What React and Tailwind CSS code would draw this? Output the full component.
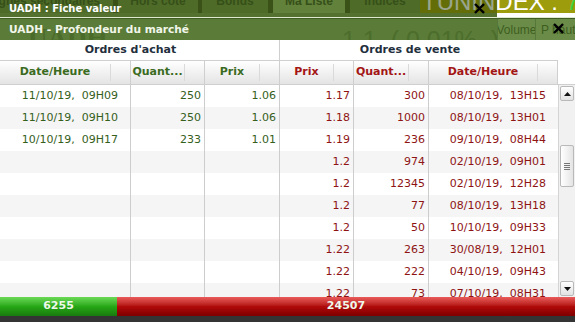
import React from "react";

const buyRows = [
  ["11/10/19,  09H09", "250", "1.06"],
  ["11/10/19,  09H10", "250", "1.06"],
  ["10/10/19,  09H17", "233", "1.01"],
];

const sellRows = [
  ["1.17", "300", "08/10/19,  13H15"],
  ["1.18", "1000", "08/10/19,  13H01"],
  ["1.19", "236", "09/10/19,  08H44"],
  ["1.2", "974", "02/10/19,  09H01"],
  ["1.2", "12345", "02/10/19,  12H28"],
  ["1.2", "77", "08/10/19,  13H18"],
  ["1.2", "50", "10/10/19,  09H33"],
  ["1.22", "263", "30/08/19,  12H01"],
  ["1.22", "222", "04/10/19,  09H43"],
  ["1.22", "73", "07/10/19,  08H31"],
];

const CloseX = ({ className }) => (
  <svg viewBox="0 0 12 12" className={className}>
    <path d="M2 2 L10 10 M10 2 L2 10" stroke="#000" strokeWidth="2.6" strokeLinecap="square" />
  </svg>
);

const HeadCell = ({ w, label, color }) => (
  <div className={`flex h-full border-r border-[#cfcfcf] ${w}`}>
    <div className={`flex flex-1 items-center justify-center font-bold ${color}`}>{label}</div>
    <div className="w-[20px] my-[3px] border-l border-[#dadada]" />
  </div>
);

export default function App() {
  const rows = Array.from({ length: 10 }, (_, i) => ({
    buy: buyRows[i] || ["", "", ""],
    sell: sellRows[i] || ["", "", ""],
  }));

  return (
    <div className="relative w-[575px] h-[322px] overflow-hidden bg-[#343434] font-['DejaVu_Sans',sans-serif]">
      {/* page behind the windows */}
      <div className="flex flex-col">
        <div className="flex h-[13px] overflow-hidden bg-[#769545] font-['Liberation_Sans',sans-serif] text-[12px] font-bold leading-[12px] text-[#49642b]">
          <div className="flex w-[113px] justify-end overflow-hidden pr-[13px] whitespace-nowrap">
            <span className="-mt-[5px]">Lignes secondaires</span>
          </div>
          <div className="w-[5px] bg-[#516827]" />
          <div className="flex w-[80px] justify-center"><span className="-mt-[5px]">Hors cote</span></div>
          <div className="w-[4px] bg-[#516827]" />
          <div className="flex w-[66px] justify-center"><span className="-mt-[5px]">Bonds</span></div>
          <div className="w-[5px] bg-[#516827]" />
          <div className="flex w-[72px] justify-center bg-[#9abf69]"><span className="-mt-[5px]">Ma Liste</span></div>
          <div className="w-[5px] bg-[#516827]" />
          <div className="flex w-[70px] justify-center"><span className="-mt-[5px]">Indices</span></div>
          <div className="flex flex-1 overflow-hidden whitespace-nowrap bg-[#9c9c0c] pl-[2px] font-normal text-[24px] leading-[24px] text-white">
            <span className="-mt-[10px]">TUNINDEX :</span>
            <span className="-mt-[10px] ml-[8px] text-[#3fd13f]">7</span>
          </div>
        </div>
        <div className="flex h-[4px]">
          <div className="w-[497px] bg-[#82a055]" />
          <div className="flex-1 bg-white" />
        </div>
        <div className="h-[1px] bg-[#dfe9d0]" />
        <div className="h-[1px] bg-[#3f5c22]" />
        <div className="flex h-[21px] overflow-hidden bg-[#5a7c38]">
          <div className="relative w-[497px] overflow-hidden">
            <span className="absolute left-[28px] top-[6px] font-['Liberation_Serif',serif] text-[27px] font-bold leading-none text-[#4b6b2b]">UADH</span>
            <span className="absolute left-[342px] top-[9px] whitespace-pre font-['Liberation_Sans',sans-serif] text-[25px] leading-none text-[#4c6d2c]">1.1  ( 0.01%  )</span>
          </div>
          <div className="flex flex-1 items-center overflow-hidden whitespace-nowrap bg-[#6a8c48] font-['Liberation_Sans',sans-serif] text-[12px] text-[#3e5e20]">
            <div className="flex h-full w-[39px] shrink-0 items-center justify-center overflow-hidden border-x border-[#56773a]">Volume</div>
            <div className="pl-[5px]">P haut</div>
          </div>
        </div>
      </div>

      {/* window 1 title */}
      <div className="absolute left-0 top-0 h-[17px] w-[497px] bg-[rgba(30,55,5,0.45)]">
        <div className="flex h-full items-center pl-[9px] pb-[1px] text-[10px] font-bold text-white">UADH : Fiche valeur</div>
        <CloseX className="absolute left-[474px] top-[3px] h-[11px] w-[11px]" />
      </div>

      {/* window 2 */}
      <div className="absolute left-0 right-0 top-[19px] bottom-[6px] flex flex-col">
        <div className="relative flex h-[21px] items-center pl-[9px] text-[10.6px] font-bold text-[#f2f6ea]">
          UADH - Profondeur du marché
          <CloseX className="absolute left-[553px] top-[4px] h-[11px] w-[11px]" />
        </div>

        <div className="flex flex-1 flex-col overflow-hidden bg-white text-[11px]">
          <div className="flex h-[21px] shrink-0 font-bold text-[#1f2f3d]">
            <div className="flex w-[280px] items-center justify-center border-r border-b border-[#cfcfcf] pr-[18px]">Ordres d'achat</div>
            <div className="flex w-[278px] items-center justify-center border-b border-[#cfcfcf] pr-[18px]">Ordres de vente</div>
          </div>
          <div className="flex h-[24px] shrink-0">
            <div className="flex w-[558px] border-b border-[#cfcfcf] bg-gradient-to-b from-white to-[#e4e4e4]">
              <HeadCell w="w-[131px]" label="Date/Heure" color="text-[#3b6b1f]" />
              <HeadCell w="w-[74px]" label="Quant..." color="text-[#3b6b1f]" />
              <HeadCell w="w-[75px]" label="Prix" color="text-[#3b6b1f]" />
              <HeadCell w="w-[74px]" label="Prix" color="text-[#a31515]" />
              <HeadCell w="w-[75px]" label="Quant..." color="text-[#a31515]" />
              <HeadCell w="w-[129px]" label="Date/Heure" color="text-[#a31515]" />
            </div>
            <div className="flex-1 border-b border-[#cfcfcf]" />
          </div>

          <div className="flex flex-1 overflow-hidden">
            <div className="w-[558px] overflow-hidden">
              {rows.map((r, i) => (
                <div key={i} className={`flex h-[22px] whitespace-pre ${i % 2 ? "bg-[#f5f5f5]" : "bg-white"}`}>
                  <div className="flex w-[131px] items-center justify-end border-r border-[#cdcdcd] pr-[12px] text-[#35601c]">{r.buy[0]}</div>
                  <div className="flex w-[74px] items-center justify-end border-r border-[#cdcdcd] pr-[3px] text-[#35601c]">{r.buy[1]}</div>
                  <div className="flex w-[75px] items-center justify-end border-r border-[#cdcdcd] pr-[3px] text-[#35601c]">{r.buy[2]}</div>
                  <div className="flex w-[74px] items-center justify-end border-r border-[#cdcdcd] pr-[3px] text-[#8e1414]">{r.sell[0]}</div>
                  <div className="flex w-[75px] items-center justify-end border-r border-[#cdcdcd] pr-[3px] text-[#8e1414]">{r.sell[1]}</div>
                  <div className="flex w-[129px] items-center justify-end pr-[12px] text-[#8e1414]">{r.sell[2]}</div>
                </div>
              ))}
            </div>
            {/* scrollbar */}
            <div className="flex flex-1 flex-col border-l border-[#d4d4d4] bg-[#f1f1f1] px-[1px] py-[1px]">
              <div className="flex h-[15px] items-center justify-center rounded-[2px] border border-[#b9b9b9] bg-gradient-to-b from-white to-[#e2e2e2]">
                <svg viewBox="0 0 7 4" className="h-[4px] w-[7px]"><path d="M0 4 L3.5 0 L7 4 Z" fill="#111" /></svg>
              </div>
              <div className="h-[44px]" />
              <div className="flex h-[42px] items-center justify-center rounded-[2px] border border-[#b9b9b9] bg-gradient-to-r from-white to-[#e4e4e4]">
                <div className="flex w-[6px] flex-col gap-[1px]">
                  <div className="h-[1px] bg-[#777]" />
                  <div className="h-[1px] bg-[#777]" />
                  <div className="h-[1px] bg-[#777]" />
                  <div className="h-[1px] bg-[#777]" />
                </div>
              </div>
              <div className="flex-1" />
              <div className="flex h-[15px] items-center justify-center rounded-[2px] border border-[#b9b9b9] bg-gradient-to-b from-white to-[#e2e2e2]">
                <svg viewBox="0 0 7 4" className="h-[4px] w-[7px]"><path d="M0 0 L3.5 4 L7 0 Z" fill="#111" /></svg>
              </div>
            </div>
          </div>
        </div>

        <div className="flex h-[19px] shrink-0 text-[11px] font-bold text-[#eef8ea]">
          <div className="flex w-[117px] items-center justify-center bg-gradient-to-b from-[#6ada55] via-[#27a816] to-[#187a0e]">6255</div>
          <div className="flex flex-1 items-center justify-center bg-gradient-to-b from-[#ea5a5a] via-[#b10a0a] to-[#7e0000]">24507</div>
        </div>
      </div>
    </div>
  );
}
